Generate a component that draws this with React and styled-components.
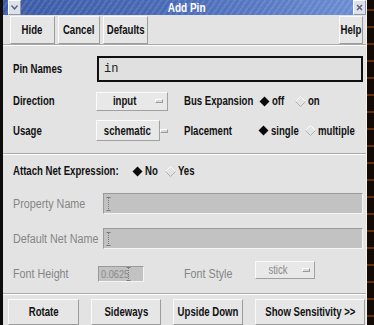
import styled, { createGlobalStyle } from "styled-components";

const GlobalStyle = createGlobalStyle`
  html, body {
    margin: 0;
    padding: 0;
    background: #120904;
  }
  * {
    box-sizing: border-box;
  }
`;

const sans = `"Liberation Sans", Arial, sans-serif`;

const Page = styled.div`
  width: 374px;
  height: 325px;
  display: flex;
  overflow: hidden;
  font-family: ${sans};
`;

const Window = styled.div`
  width: 367px;
  height: 325px;
  flex: none;
  border-left: 3px solid #0c0c0c;
  border-right: 1px solid #f2f2f2;
  background: #e3e3e3;
  display: flex;
  flex-direction: column;
`;

const Desktop = styled.div`
  flex: 1;
  background:
    repeating-linear-gradient(180deg, transparent 0 9px, rgba(190, 90, 20, 0.45) 9px 11px, transparent 11px 17px),
    #140a05;
`;

// the dialog font is a condensed helvetica: squeeze arial horizontally
const Txt = styled.span`
  display: inline-block;
  white-space: nowrap;
  transform: scaleX(${(p) => p.$sx || 0.8});
  transform-origin: ${(p) => (p.$c ? "center" : "left")} center;
`;

const TitleBar = styled.div`
  height: 17px;
  display: flex;
  align-items: center;
  padding-left: 5px;
  background:
    repeating-linear-gradient(-55deg, rgba(255, 255, 255, 0.1) 0 2px, transparent 2px 5px),
    linear-gradient(90deg, #3c5ba6 0%, #4b6cb8 50%, #6e8fd3 100%);
`;

const TitleBox = styled.div`
  width: 13px;
  height: 15px;
  display: flex;
  align-items: center;
  justify-content: center;
  background: #dde1ea;
  border: 1px solid;
  border-color: #ffffff #8d95aa #8d95aa #ffffff;
`;

const Title = styled.div`
  flex: 1;
  display: flex;
  justify-content: center;
  color: #ffffff;
  font-weight: bold;
  font-size: 12.5px;
`;

const ButtonBar = styled.div`
  height: 32px;
  display: flex;
  align-items: center;
  gap: 3px;
  padding: 1px 3px 0 7px;
  border-bottom: 1px solid #a9a9a9;
  box-shadow: 0 1px 0 #ffffff;
`;

const Button = styled.button`
  width: ${(p) => p.$w}px;
  height: ${(p) => p.$h || 28}px;
  margin-left: ${(p) => (p.$push ? "auto" : "0")};
  padding: 0;
  display: flex;
  align-items: center;
  justify-content: center;
  background: #e6e6e6;
  border: 1px solid;
  border-color: #fafafa #9c9c9c #9c9c9c #fafafa;
  font-family: ${sans};
  font-weight: bold;
  font-size: 12px;
  color: #111;
`;

const Form = styled.div`
  display: flex;
  flex-direction: column;
`;

const Row = styled.div`
  height: ${(p) => p.$h}px;
  margin-top: ${(p) => p.$mt}px;
  padding: 0 3px 0 10px;
  display: flex;
  align-items: center;
`;

const Label = styled.div`
  width: ${(p) => p.$w}px;
  flex: none;
  font-weight: ${(p) => (p.$off ? "normal" : "bold")};
  font-size: ${(p) => (p.$off ? "12.5px" : "12px")};
  color: ${(p) => (p.$off ? "#858585" : "#111")};
`;

const Slot = styled.div`
  width: ${(p) => p.$w}px;
  flex: none;
  display: flex;
  align-items: center;
`;

const TextField = styled.div`
  flex: ${(p) => (p.$w ? "none" : "1")};
  width: ${(p) => (p.$w ? `${p.$w}px` : "auto")};
  height: 100%;
  display: flex;
  align-items: center;
  padding-left: ${(p) => (p.$off ? 2 : 5)}px;
  background: ${(p) => (p.$off ? "#c2c2c2" : "#e0e0e0")};
  border: ${(p) => (p.$off ? "1px solid" : "2px solid")};
  border-color: ${(p) => (p.$off ? "#9a9a9a #f4f4f4 #f4f4f4 #9a9a9a" : "#101010")};
  font-family: "Liberation Mono", "DejaVu Sans Mono", monospace;
  font-size: 12px;
  color: ${(p) => (p.$off ? "#8a8a8a" : "#222")};
`;

const FieldText = styled.span`
  width: 25px;
  flex: none;
  font-family: ${sans};
  font-size: 11.5px;
`;

const Dropdown = styled.div`
  width: ${(p) => p.$w}px;
  height: ${(p) => p.$h || 19}px;
  flex: none;
  align-self: ${(p) => (p.$up ? "flex-start" : "center")};
  margin-top: ${(p) => (p.$up ? "-2px" : "0")};
  display: flex;
  align-items: center;
  padding: 0 4px 0 1px;
  background: #e8e8e8;
  border: 1px solid;
  border-color: #fbfbfb #a0a0a0 #a0a0a0 #fbfbfb;
  font-weight: ${(p) => (p.$off ? "normal" : "bold")};
  font-size: 12px;
  color: ${(p) => (p.$off ? "#8a8a8a" : "#111")};
`;

const DropText = styled.span`
  flex: 1;
  display: flex;
  justify-content: center;
`;

const Indicator = styled.span`
  width: 8px;
  height: 4px;
  margin-left: 3px;
  flex: none;
  border: 1px solid;
  border-color: #ffffff #9a9a9a #9a9a9a #ffffff;
  background: #d8d8d8;
`;

const RadioGroup = styled.div`
  display: flex;
  align-items: center;
  gap: 7px;
`;

const Option = styled.div`
  display: flex;
  align-items: center;
  gap: 2px;
  font-weight: bold;
  font-size: 12px;
  color: #111;
`;

const OptionText = styled.span`
  width: ${(p) => p.$w}px;
  flex: none;
`;

const Separator = styled.div`
  height: 2px;
  margin-top: ${(p) => p.$mt}px;
  border-top: 1px solid #a9a9a9;
  border-bottom: 1px solid #ffffff;
`;

const BottomBar = styled.div`
  margin-top: 4px;
  padding: 0 1px 0 5px;
  display: flex;
  justify-content: space-between;
`;

const Diamond = ({ on }) => (
  <svg width="11" height="11" viewBox="0 0 11 11" style={{ flex: "none" }}>
    {on ? (
      <path d="M5.5 0.5 L10.5 5.5 L5.5 10.5 L0.5 5.5 Z" fill="#0a0a0a" />
    ) : (
      <>
        <path d="M0.5 5.5 L5.5 0.5 L10.5 5.5" fill="none" stroke="#ffffff" strokeWidth="1" />
        <path d="M0.5 5.5 L5.5 10.5 L10.5 5.5" fill="none" stroke="#b0b0b0" strokeWidth="1" />
      </>
    )}
  </svg>
);

const Cursor = () => (
  <svg width="5" height="14" viewBox="0 0 5 14" style={{ flex: "none" }}>
    <path d="M0.5 0.5 H4.5 M0.5 13.5 H4.5" stroke="#7a7a7a" strokeWidth="1" />
    <path d="M2.5 1 V13" stroke="#7a7a7a" strokeWidth="1" strokeDasharray="1 1" />
  </svg>
);

const Radio = ({ options, value }) => (
  <RadioGroup>
    {options.map(([name, w]) => (
      <Option key={name}>
        <Diamond on={name === value} />
        <OptionText $w={w}>
          <Txt>{name}</Txt>
        </OptionText>
      </Option>
    ))}
  </RadioGroup>
);

const Btn = ({ children, ...rest }) => (
  <Button {...rest}>
    <Txt $c>{children}</Txt>
  </Button>
);

const App = () => {
  return (
    <Page>
      <GlobalStyle />
      <Window>
        <TitleBar>
          <TitleBox>
            <svg width="7" height="5" viewBox="0 0 7 5">
              <path d="M0.5 0.5 L3.5 4 L6.5 0.5" fill="none" stroke="#56607a" strokeWidth="1.4" />
            </svg>
          </TitleBox>
          <Title>
            <Txt $c>Add Pin</Txt>
          </Title>
          <TitleBox>
            <svg width="7" height="7" viewBox="0 0 7 7">
              <path d="M1 1 L6 6 M6 1 L1 6" stroke="#56607a" strokeWidth="1.5" />
            </svg>
          </TitleBox>
        </TitleBar>

        <ButtonBar>
          <Btn $w={45}>Hide</Btn>
          <Btn $w={42}>Cancel</Btn>
          <Btn $w={45}>Defaults</Btn>
          <Btn $w={24} $push>Help</Btn>
        </ButtonBar>

        <Form>
          <Row $h={26} $mt={11}>
            <Label $w={84}><Txt>Pin Names</Txt></Label>
            <TextField>in</TextField>
          </Row>

          <Row $h={20} $mt={9}>
            <Label $w={83}><Txt>Direction</Txt></Label>
            <Slot $w={88}>
              <Dropdown $w={72}>
                <DropText><Txt $c>input</Txt></DropText>
                <Indicator />
              </Dropdown>
            </Slot>
            <Label $w={75}><Txt>Bus Expansion</Txt></Label>
            <Radio options={[["off", 16], ["on", 13]]} value="off" />
          </Row>

          <Row $h={21} $mt={9}>
            <Label $w={83}><Txt>Usage</Txt></Label>
            <Slot $w={88}>
              <Dropdown $w={64} $h={21}>
                <DropText><Txt $c>schematic</Txt></DropText>
                <Indicator />
              </Dropdown>
            </Slot>
            <Label $w={74}><Txt>Placement</Txt></Label>
            <Radio options={[["single", 27], ["multiple", 40]]} value="single" />
          </Row>

          <Separator $mt={12} />

          <Row $h={18} $mt={7}>
            <Label $w={119}><Txt>Attach Net Expression:</Txt></Label>
            <Radio options={[["No", 13], ["Yes", 17]]} value="No" />
          </Row>

          <Row $h={21} $mt={13}>
            <Label $w={90} $off><Txt $sx={0.86}>Property Name</Txt></Label>
            <TextField $off>
              <Cursor />
            </TextField>
          </Row>

          <Row $h={21} $mt={14}>
            <Label $w={90} $off><Txt $sx={0.86}>Default Net Name</Txt></Label>
            <TextField $off>
              <Cursor />
            </TextField>
          </Row>

          <Row $h={21} $mt={14}>
            <Label $w={85} $off><Txt $sx={0.86}>Font Height</Txt></Label>
            <Slot $w={86}>
              <TextField $off $w={46}>
                <FieldText><Txt>0.0625</Txt></FieldText>
                <Cursor />
              </TextField>
            </Slot>
            <Label $w={71} $off><Txt $sx={0.86}>Font Style</Txt></Label>
            <Dropdown $w={60} $h={18} $up $off>
              <DropText><Txt $c>stick</Txt></DropText>
              <Indicator />
            </Dropdown>
          </Row>

          <Separator $mt={9} />

          <BottomBar>
            <Btn $w={71} $h={26}>Rotate</Btn>
            <Btn $w={70} $h={26}>Sideways</Btn>
            <Btn $w={70} $h={26}>Upside Down</Btn>
            <Btn $w={110} $h={26}>Show Sensitivity &gt;&gt;</Btn>
          </BottomBar>
        </Form>
      </Window>
      <Desktop />
    </Page>
  );
};

export default App;
